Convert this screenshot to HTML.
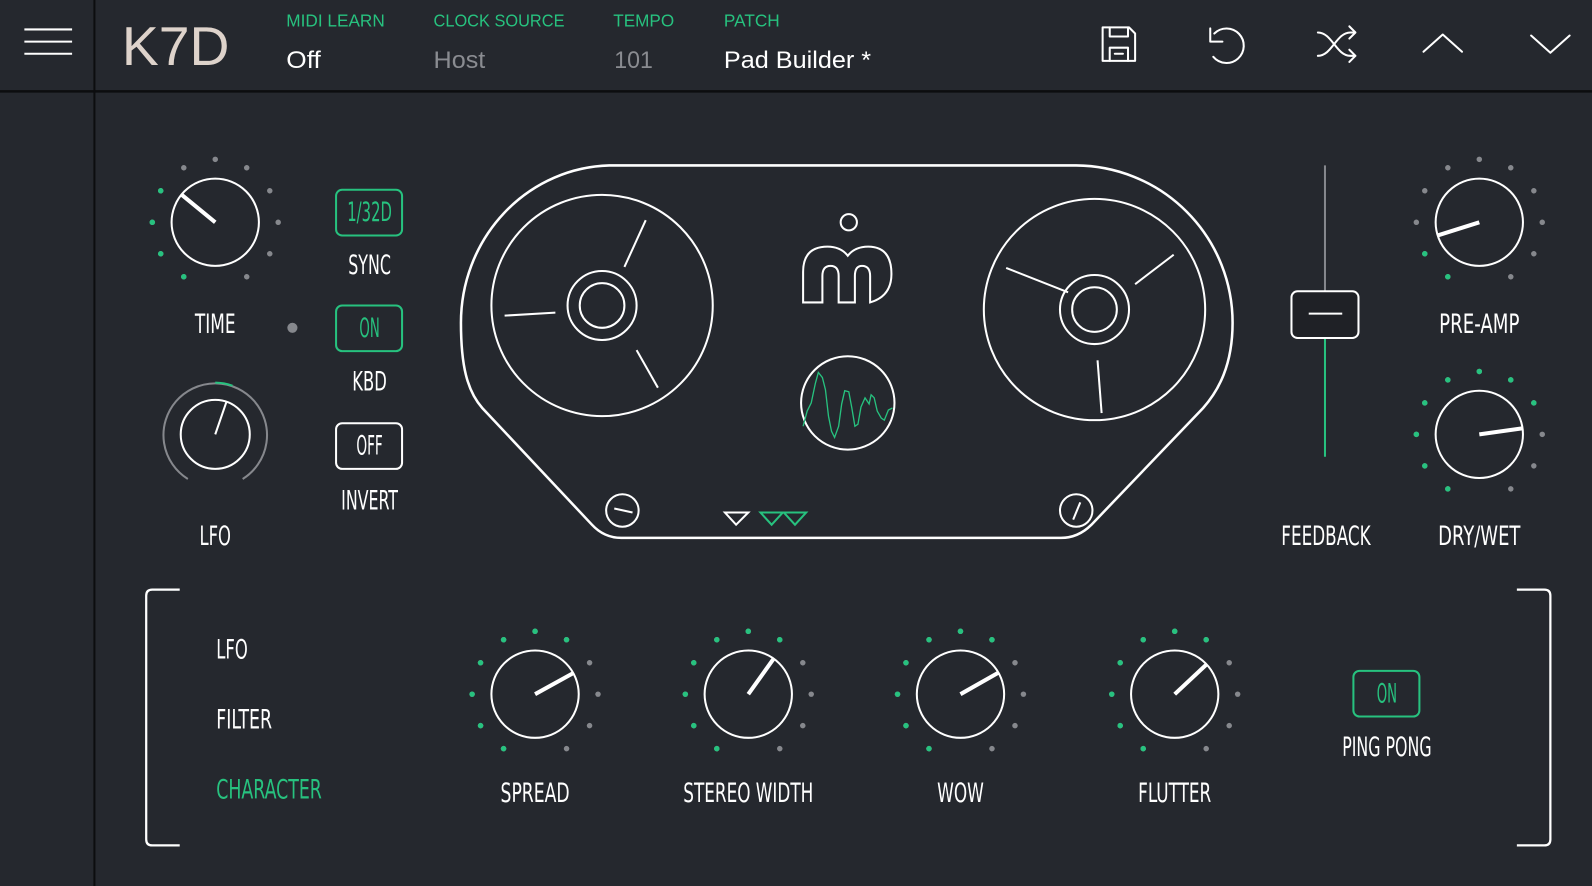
<!DOCTYPE html>
<html><head><meta charset="utf-8"><style>
html,body{margin:0;padding:0;background:#25282e;overflow:hidden}
svg{display:block}
.c{font-family:"Liberation Sans Narrow","DejaVu Sans Condensed","Liberation Sans",sans-serif;font-size:26px;fill:#fff;text-anchor:middle}
.h{font-family:"Liberation Sans",sans-serif}
</style></head><body>
<svg width="1592" height="886" viewBox="0 0 1568 873" preserveAspectRatio="none" xmlns="http://www.w3.org/2000/svg">
<defs>
<g id="d11" fill="#86888d">
<circle r="2.7" cx="62" transform="rotate(120)"/><circle r="2.7" cx="62" transform="rotate(150)"/><circle r="2.7" cx="62" transform="rotate(180)"/><circle r="2.7" cx="62" transform="rotate(210)"/><circle r="2.7" cx="62" transform="rotate(240)"/><circle r="2.7" cx="62" transform="rotate(270)"/><circle r="2.7" cx="62" transform="rotate(300)"/><circle r="2.7" cx="62" transform="rotate(330)"/><circle r="2.7" cx="62" transform="rotate(0)"/><circle r="2.7" cx="62" transform="rotate(30)"/><circle r="2.7" cx="62" transform="rotate(60)"/>
</g>
<g id="g7" fill="#27c27f">
<circle r="2.7" cx="62" transform="rotate(120)"/><circle r="2.7" cx="62" transform="rotate(150)"/><circle r="2.7" cx="62" transform="rotate(180)"/><circle r="2.7" cx="62" transform="rotate(210)"/><circle r="2.7" cx="62" transform="rotate(240)"/><circle r="2.7" cx="62" transform="rotate(270)"/><circle r="2.7" cx="62" transform="rotate(300)"/>
</g>
</defs>
<rect width="1568" height="873" fill="#25282e"/>
<!-- top bar -->
<line x1="0" y1="90" x2="1568" y2="90" stroke="#0c0d0f" stroke-width="2.5"/>
<line x1="93" y1="0" x2="93" y2="873" stroke="#0c0d0f" stroke-width="2"/>
<g stroke="#fff" stroke-width="2"><line x1="24" y1="29" x2="71" y2="29"/><line x1="24" y1="41" x2="71" y2="41"/><line x1="24" y1="53" x2="71" y2="53"/></g>
<text x="120" y="64" class="h" font-size="54" fill="#f3e6dc" textLength="106" lengthAdjust="spacingAndGlyphs" style="font-weight:normal;opacity:.9">K7D</text>
<g class="h" font-size="17" fill="#27c27f">
<text x="282" y="26" textLength="97" lengthAdjust="spacingAndGlyphs">MIDI LEARN</text><text x="427" y="26" textLength="129" lengthAdjust="spacingAndGlyphs">CLOCK SOURCE</text><text x="604" y="26" textLength="60" lengthAdjust="spacingAndGlyphs">TEMPO</text><text x="713" y="26" textLength="55" lengthAdjust="spacingAndGlyphs">PATCH</text></g>
<g class="h" font-size="24">
<text x="282" y="67" fill="#fff" textLength="34" lengthAdjust="spacingAndGlyphs">Off</text><text x="427" y="67" fill="#8a8c91" textLength="51" lengthAdjust="spacingAndGlyphs">Host</text><text x="605" y="67" fill="#8a8c91" textLength="38" lengthAdjust="spacingAndGlyphs">101</text><text x="713" y="67" fill="#fff" textLength="145" lengthAdjust="spacingAndGlyphs">Pad Builder *</text></g>
<!-- icons -->
<g fill="none" stroke="#fff" stroke-width="2" stroke-linejoin="round" stroke-linecap="round">
<path d="M1086 27 L1112 27 L1118 33 L1118 60 L1086 60 Z"/>
<path d="M1093 27 L1093 36 L1111 36 L1111 27"/>
<path d="M1093 60 L1093 47 L1111 47 L1111 60"/><line x1="1098" y1="53" x2="1106" y2="53"/>
<path d="M1196 33 A17 17 0 1 1 1195 56"/>
<path d="M1192 28 L1192 41 L1204 41"/>
<path d="M1298 32 C1312 32 1316 55 1330 55 L1335 55 M1298 55 C1312 55 1316 32 1330 32 L1335 32 M1329 26 L1335 32 L1329 38 M1329 49 L1335 55 L1329 61"/>
<path d="M1402 51 L1421 34 L1440 51"/>
<path d="M1508 35 L1527 52 L1546 35"/>
</g>
<!-- TIME knob -->
<g transform="translate(212,219)"><use href="#d11"/><g fill="#27c27f"><circle r="2.7" cx="62" transform="rotate(120)"/><circle r="2.7" cx="62" transform="rotate(150)"/><circle r="2.7" cx="62" transform="rotate(180)"/><circle r="2.7" cx="62" transform="rotate(210)"/></g>
<circle r="43" fill="none" stroke="#fff" stroke-width="2"/><line x1="0" y1="0" x2="-33" y2="-27" stroke="#fff" stroke-width="4"/></g>
<text x="212" y="328" class="c" textLength="40" lengthAdjust="spacingAndGlyphs">TIME</text>
<circle cx="288" cy="323" r="5" fill="#86888d"/>
<!-- LFO knob -->
<g transform="translate(212,428)" fill="none">
<path d="M-27 44 A51 51 0 1 1 27 44" stroke="#86888d" stroke-width="2"/>
<path d="M0 -51 A51 51 0 0 1 17 -48" stroke="#27c27f" stroke-width="2"/>
<circle r="34" stroke="#fff" stroke-width="2"/><line x1="0" y1="0" x2="11" y2="-32" stroke="#fff" stroke-width="2"/></g>
<text x="212" y="537" class="c" textLength="31" lengthAdjust="spacingAndGlyphs">LFO</text>
<!-- buttons -->
<rect x="331" y="187" width="65" height="45" rx="6" fill="none" stroke="#27c27f" stroke-width="2"/>
<text x="364" y="218" class="c" font-size="22" style="fill:#27c27f" textLength="44" lengthAdjust="spacingAndGlyphs">1/32D</text>
<text x="364" y="270" class="c" textLength="42" lengthAdjust="spacingAndGlyphs">SYNC</text>
<rect x="331" y="301" width="65" height="45" rx="6" fill="none" stroke="#27c27f" stroke-width="2"/>
<text x="364" y="332" class="c" font-size="22" style="fill:#27c27f" textLength="20" lengthAdjust="spacingAndGlyphs">ON</text>
<text x="364" y="385" class="c" textLength="34" lengthAdjust="spacingAndGlyphs">KBD</text>
<rect x="331" y="417" width="65" height="45" rx="6" fill="none" stroke="#fff" stroke-width="2"/>
<text x="364" y="448" class="c" font-size="22" textLength="26" lengthAdjust="spacingAndGlyphs">OFF</text>
<text x="364" y="502" class="c" textLength="56" lengthAdjust="spacingAndGlyphs">INVERT</text>
<!-- tape deck -->
<g fill="none" stroke="#fff" stroke-width="2">
<path d="M600 163 L1060 163 A155 155 0 0 1 1214 318 C1214 360 1200 385 1185 402 L1075 517 Q1062 530 1045 530 L612 530 Q595 530 583 517 L475 402 C460 385 454 360 454 318 A150 155 0 0 1 600 163 Z" stroke-width="2.5"/>
<circle cx="593" cy="301" r="109"/><circle cx="593" cy="301" r="34"/><circle cx="593" cy="301" r="22"/>
<line x1="615" y1="263" x2="636" y2="217"/><line x1="547" y1="308" x2="497" y2="311"/><line x1="627" y1="345" x2="648" y2="382"/>
<circle cx="1078" cy="305" r="109"/><circle cx="1078" cy="305" r="34"/><circle cx="1078" cy="305" r="22"/>
<line x1="1052" y1="288" x2="991" y2="264"/><line x1="1118" y1="280" x2="1156" y2="251"/><line x1="1081" y1="355" x2="1085" y2="407"/>
<circle cx="613" cy="503" r="16"/><line x1="605" y1="501" x2="623" y2="505"/>
<circle cx="1060" cy="503" r="16"/><line x1="1057" y1="512" x2="1064" y2="495"/>
<path d="M714 505 L737 505 L725 517 Z"/>
<path d="M749 505 L771 505 L760 517 Z M772 505 L794 505 L783 517 Z" stroke="#27c27f"/>
<circle cx="836" cy="219" r="8"/>
<path d="M791 298 L791 268 Q791 243 815 243 Q828 243 835 252 Q842 243 855 243 Q878 243 878 270 Q878 292 857 298 L857 272 Q857 262 849 262 Q842 262 842 272 L842 298 L826 298 L826 272 Q826 262 818 262 Q810 262 810 272 L810 298 Z"/>
<circle cx="835" cy="397" r="46"/>
<path d="M791 420 L795 405 L799 397 L803 378 L806 367 L810 372 L813 384 L816 410 L819 425 L822 431 L826 420 L829 398 L832 385 L836 386 L839 402 L842 420 L845 418 L848 401 L852 392 L856 398 L858 389 L861 392 L864 405 L868 412 L871 414 L875 404 L879 402" stroke="#27c27f" stroke-width="1.3"/>
</g>
<!-- feedback -->
<line x1="1305" y1="163" x2="1305" y2="287" stroke="#86888d" stroke-width="2"/>
<line x1="1305" y1="333" x2="1305" y2="450" stroke="#27c27f" stroke-width="2"/>
<rect x="1272" y="287" width="66" height="46" rx="6" fill="#1f2126" stroke="#fff" stroke-width="2"/>
<line x1="1289" y1="309" x2="1322" y2="309" stroke="#fff" stroke-width="2"/>
<text x="1306" y="537" class="c" textLength="88" lengthAdjust="spacingAndGlyphs">FEEDBACK</text>
<!-- PRE-AMP -->
<g transform="translate(1457,219)"><use href="#d11"/><g fill="#27c27f"><circle r="2.7" cx="62" transform="rotate(120)"/><circle r="2.7" cx="62" transform="rotate(150)"/></g>
<circle r="43" fill="none" stroke="#fff" stroke-width="2"/><line x1="0" y1="0" x2="-41" y2="13" stroke="#fff" stroke-width="4"/></g>
<text x="1457" y="328" class="c" textLength="79" lengthAdjust="spacingAndGlyphs">PRE-AMP</text>
<!-- DRY/WET -->
<g transform="translate(1457,428)"><use href="#d11"/><use href="#g7"/><circle r="2.7" cx="62" transform="rotate(-30)" fill="#27c27f"/>
<circle r="43" fill="none" stroke="#fff" stroke-width="2"/><line x1="0" y1="0" x2="43" y2="-6" stroke="#fff" stroke-width="4"/></g>
<text x="1457" y="537" class="c" textLength="81" lengthAdjust="spacingAndGlyphs">DRY/WET</text>
<!-- brackets -->
<g fill="none" stroke="#fff" stroke-width="2.2">
<path d="M177 581 L150 581 Q144 581 144 587 L144 827 Q144 833 150 833 L177 833"/>
<path d="M1494 581 L1521 581 Q1527 581 1527 587 L1527 827 Q1527 833 1521 833 L1494 833"/></g>
<g class="c" style="text-anchor:start">
<text x="213" y="649" textLength="31" lengthAdjust="spacingAndGlyphs">LFO</text><text x="213" y="718" textLength="55" lengthAdjust="spacingAndGlyphs">FILTER</text><text x="213" y="787" style="fill:#27c27f" textLength="104" lengthAdjust="spacingAndGlyphs">CHARACTER</text></g>
<!-- bottom knobs -->
<g transform="translate(527,684)"><use href="#d11"/><use href="#g7"/><circle r="43" fill="none" stroke="#fff" stroke-width="2"/><line x1="0" y1="0" x2="38" y2="-21" stroke="#fff" stroke-width="4"/></g>
<g transform="translate(737,684)"><use href="#d11"/><use href="#g7"/><circle r="43" fill="none" stroke="#fff" stroke-width="2"/><line x1="0" y1="0" x2="25" y2="-35" stroke="#fff" stroke-width="4"/></g>
<g transform="translate(946,684)"><use href="#d11"/><use href="#g7"/><circle r="43" fill="none" stroke="#fff" stroke-width="2"/><line x1="0" y1="0" x2="37" y2="-21" stroke="#fff" stroke-width="4"/></g>
<g transform="translate(1157,684)"><use href="#d11"/><use href="#g7"/><circle r="43" fill="none" stroke="#fff" stroke-width="2"/><line x1="0" y1="0" x2="31" y2="-29" stroke="#fff" stroke-width="4"/></g>
<text x="527" y="790" class="c" textLength="68" lengthAdjust="spacingAndGlyphs">SPREAD</text><text x="737" y="790" class="c" textLength="128" lengthAdjust="spacingAndGlyphs">STEREO WIDTH</text><text x="946" y="790" class="c" textLength="46" lengthAdjust="spacingAndGlyphs">WOW</text><text x="1157" y="790" class="c" textLength="72" lengthAdjust="spacingAndGlyphs">FLUTTER</text>
<rect x="1333" y="661" width="65" height="45" rx="6" fill="none" stroke="#27c27f" stroke-width="2"/>
<text x="1366" y="692" class="c" font-size="22" style="fill:#27c27f" textLength="20" lengthAdjust="spacingAndGlyphs">ON</text>
<text x="1366" y="745" class="c" textLength="88" lengthAdjust="spacingAndGlyphs">PING PONG</text>
</svg>
</body></html>
